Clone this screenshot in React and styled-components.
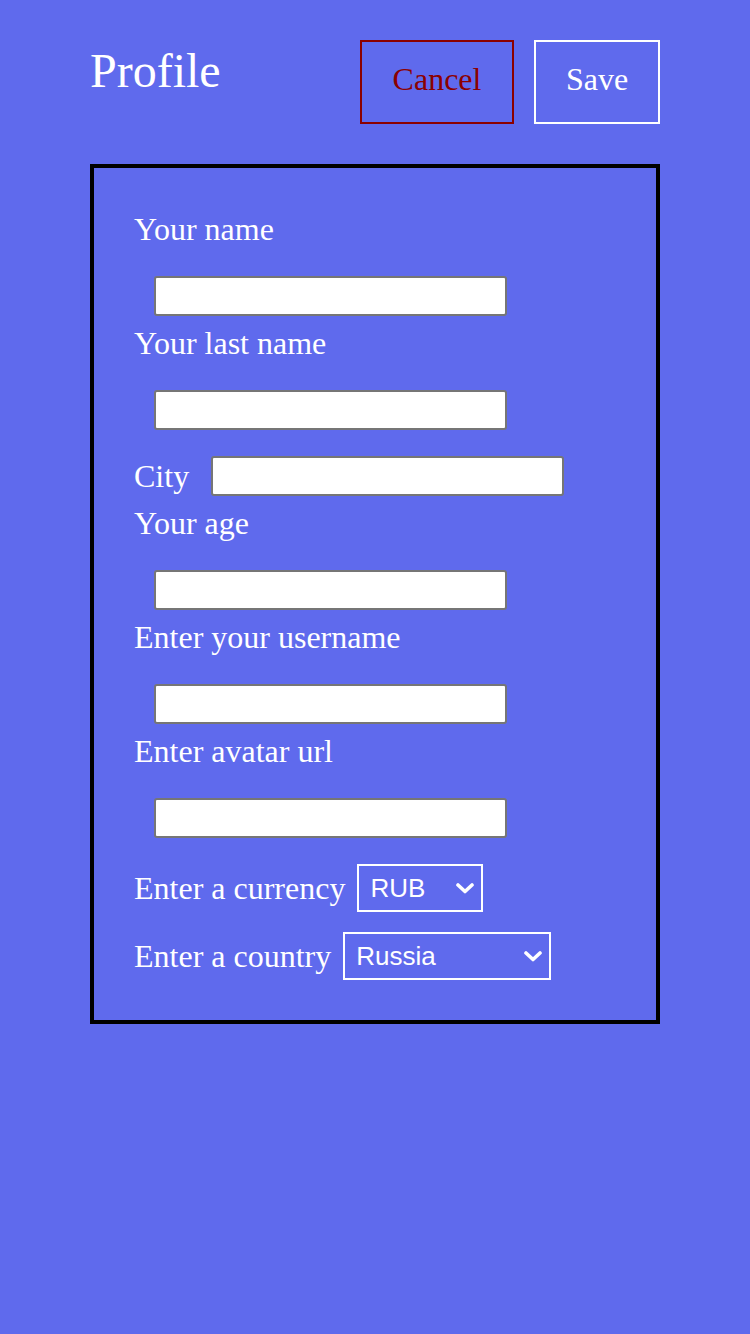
import React from 'react';
import styled, { createGlobalStyle } from 'styled-components';

const GlobalStyle = createGlobalStyle`
    html, body {
        margin: 0;
        padding: 0;
        background: #5f6aed;
    }
    body {
        font-family: "Liberation Serif", "Times New Roman", serif;
        color: white;
        min-height: 1334px;
    }
`;

const Page = styled.div`
    width: 570px;
    margin: 0 auto;
    padding-top: 40px;
`;

const Header = styled.div`
    display: flex;
    justify-content: space-between;
    align-items: flex-start;
`;

const Title = styled.h1`
    margin: 3px 0 0;
    font-size: 48px;
    font-weight: normal;
    line-height: 55px;
`;

const Buttons = styled.div`
    display: flex;
    gap: 20px;
`;

const Button = styled.button`
    box-sizing: border-box;
    width: ${props => props.width}px;
    height: 84px;
    padding: 0 0 6px;
    background: transparent;
    border: 2px solid ${props => props.danger ? '#8b0000' : 'white'};
    color: ${props => props.danger ? '#8b0000' : 'white'};
    font-family: "Liberation Serif", "Times New Roman", serif;
    font-size: 32px;
    cursor: pointer;
`;

const Form = styled.form`
    margin-top: 40px;
    border: 4px solid black;
    padding: 38px 40px 40px;
    display: flex;
    flex-direction: column;
`;

const Field = styled.label`
    display: flex;
    flex-direction: column;
    align-items: flex-start;
    margin-bottom: 4px;
`;

const LabelText = styled.span`
    font-size: 32px;
    line-height: 46px;
`;

const Input = styled.input`
    box-sizing: border-box;
    width: 353px;
    height: 40px;
    margin: 24px 0 0 20px;
    border: 2px solid #767676;
    border-radius: 3px;
    background: white;
    font-size: 18px;
`;

const InlineRow = styled.label`
    display: flex;
    align-items: center;
    gap: ${props => props.gap || 12}px;
    margin-top: ${props => props.top || 0}px;
    font-size: 32px;
    line-height: 37px;

    & + ${Field} {
        margin-top: 4px;
    }
`;

const InlineInput = styled(Input)`
    margin: 0;
`;

const SelectWrap = styled.span`
    position: relative;
    display: inline-flex;
`;

const Select = styled.select`
    appearance: none;
    box-sizing: border-box;
    width: ${props => props.width}px;
    height: 48px;
    padding: 0 0 0 11px;
    border: 2px solid white;
    border-radius: 0;
    background: transparent;
    color: white;
    font-family: "Liberation Sans", Arial, sans-serif;
    font-size: 26px;
    outline: none;
`;

const Chevron = styled.svg`
    position: absolute;
    right: 9px;
    top: 19px;
    pointer-events: none;
`;

function Dropdown({ width, options }) {
    return (
        <SelectWrap>
            <Select width={width} defaultValue={options[0]}>
                {options.map(o => <option key={o} value={o}>{o}</option>)}
            </Select>
            <Chevron width="18" height="11" viewBox="0 0 18 11">
                <path d="M2 2 L9 8.5 L16 2" fill="none" stroke="white" strokeWidth="3.6" strokeLinecap="round" strokeLinejoin="round" />
            </Chevron>
        </SelectWrap>
    );
}

export default class App extends React.Component {
    render() {
        return (
            <>
                <GlobalStyle />
                <Page>
                    <Header>
                        <Title>Profile</Title>
                        <Buttons>
                            <Button danger width={154}>Cancel</Button>
                            <Button width={126}>Save</Button>
                        </Buttons>
                    </Header>
                    <Form onSubmit={e => e.preventDefault()}>
                        <Field>
                            <LabelText>Your name</LabelText>
                            <Input type="text" />
                        </Field>
                        <Field>
                            <LabelText>Your last name</LabelText>
                            <Input type="text" />
                        </Field>
                        <InlineRow top={22} gap={22}>
                            City
                            <InlineInput type="text" />
                        </InlineRow>
                        <Field>
                            <LabelText>Your age</LabelText>
                            <Input type="text" />
                        </Field>
                        <Field>
                            <LabelText>Enter your username</LabelText>
                            <Input type="text" />
                        </Field>
                        <Field>
                            <LabelText>Enter avatar url</LabelText>
                            <Input type="text" />
                        </Field>
                        <InlineRow top={22}>
                            Enter a currency
                            <Dropdown width={126} options={['RUB', 'USD', 'EUR']} />
                        </InlineRow>
                        <InlineRow top={20}>
                            Enter a country
                            <Dropdown width={208} options={['Russia', 'USA', 'Germany']} />
                        </InlineRow>
                    </Form>
                </Page>
            </>
        );
    }
}
